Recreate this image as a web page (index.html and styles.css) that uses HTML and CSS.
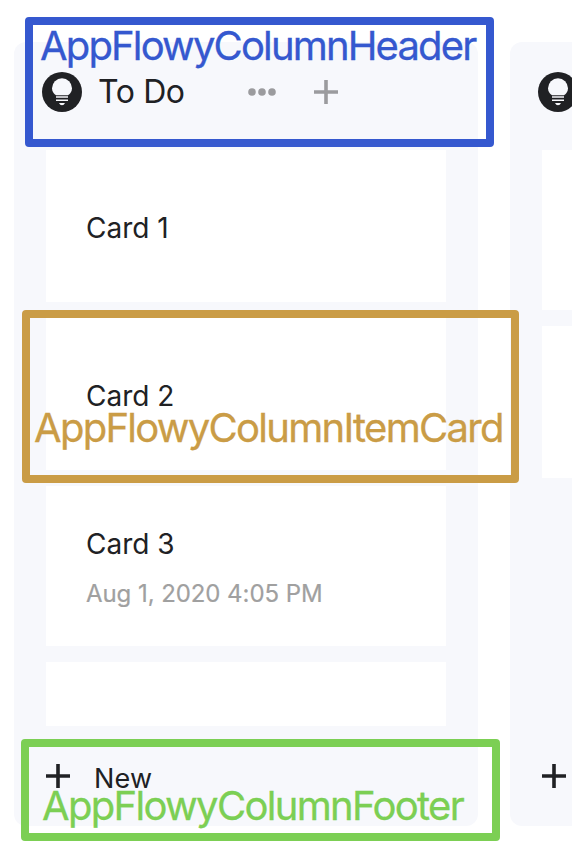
FILE: index.html
```html
<!DOCTYPE html>
<html lang="en">
<head>
<meta charset="utf-8">
<title>Board</title>
<link rel="stylesheet" href="styles.css">
</head>
<body>
<svg class="defs" aria-hidden="true">
  <symbol id="bulb" viewBox="0 0 40 40">
    <circle cx="20" cy="20" r="20" fill="#202124"/>
    <path d="M14 23.200C11.600 21.600 10 19.200 10 16.200a10 10 0 0 1 20 0c0 3-1.600 5.400-4 7z" fill="#f7f8fc"/>
    <path d="M14 24.200h12v1.600H14zM14 27.400h12v1.700H14zM17 31.100h6q-1 2.200-3 2.200t-3-2.200z" fill="#f7f8fc"/>
  </symbol>
  <symbol id="plus" viewBox="0 0 24 24"><path d="M0 12h24M12 0v24" stroke="currentColor" stroke-width="3.600"/></symbol>
</svg>
<main class="board">
  <section class="column">
    <header class="column-header">
      <svg class="bulb"><use href="#bulb"/></svg>
      <h2 class="title">To Do</h2>
      <svg class="dots" viewBox="0 0 28 8"><circle cx="4" cy="4" r="3.800"/><circle cx="14" cy="4" r="3.800"/><circle cx="24" cy="4" r="3.800"/></svg>
      <svg class="plus plus-muted"><use href="#plus"/></svg>
    </header>
    <div class="cards">
      <article class="card"><p class="name">Card 1</p></article>
      <article class="card"><p class="name">Card 2</p></article>
      <article class="card card-dated"><p class="name">Card 3</p><p class="date">Aug 1, 2020 4:05 PM</p></article>
      <article class="card card-empty"></article>
    </div>
    <footer class="column-footer">
      <svg class="plus"><use href="#plus"/></svg>
      <span class="new">New</span>
    </footer>
  </section>
  <section class="column">
    <header class="column-header"><svg class="bulb"><use href="#bulb"/></svg></header>
    <div class="cards">
      <article class="card card-dated"></article>
      <article class="card"></article>
    </div>
    <footer class="column-footer"><svg class="plus"><use href="#plus"/></svg></footer>
  </section>
</main>
<div class="note note-header"><span>AppFlowyColumnHeader</span></div>
<div class="note note-card"><span>AppFlowyColumnItemCard</span></div>
<div class="note note-footer"><span>AppFlowyColumnFooter</span></div>
</body>
</html>
```
FILE: styles.css
```css
* { box-sizing: border-box; margin: 0; padding: 0; }
html { overflow: hidden; }
body {
  position: relative;
  width: 572px;
  height: 852px;
  overflow: hidden;
  background: #fff;
  color: #202124;
  font-family: Inter, "Liberation Sans", sans-serif;
}
svg { display: block; flex: none; }
.defs { position: absolute; width: 0; height: 0; }
.board { display: flex; gap: 32px; padding: 42px 0 0 14px; overflow: hidden; }
.column {
  display: flex;
  flex: none;
  flex-direction: column;
  width: 464px;
  height: 784px;
  border-radius: 12px;
  background: #f7f8fc;
}
.column-header { display: flex; align-items: center; height: 108px; padding: 0 28px 8px; }
.bulb { width: 40px; height: 40px; }
.title { width: 148px; margin-left: 16px; font-size: 32px; font-weight: 400; line-height: 40px; letter-spacing: -0.4px; }
.dots { width: 28px; height: 8px; margin-left: 2px; fill: #9b9b9e; }
.plus { width: 24px; height: 24px; }
.plus-muted { margin-left: 38px; color: #9b9b9e; }
.cards { display: flex; flex-direction: column; gap: 16px; padding: 0 32px; }
.card { height: 152px; padding: 58px 40px 0; background: #fff; }
.card-dated { height: 160px; padding-top: 38px; }
.card-empty { height: 64px; }
.name { font-size: 28px; line-height: 40px; }
.date { margin-top: 10px; color: #a0a0a0; font-size: 24px; line-height: 40px; letter-spacing: -0.07px; white-space: nowrap; -webkit-text-stroke: 0.2px; }
.column-footer { display: flex; align-items: center; height: 100px; margin-top: auto; padding-left: 32px; }
.new { margin: 5px 0 0 24px; font-size: 27px; line-height: 40px; letter-spacing: 0.2px; }

/* Callouts drawn over the board */
.note { position: absolute; border: 8px solid; border-radius: 4px; font-size: 40px; line-height: 48px; white-space: nowrap; -webkit-text-stroke: 0.3px; }
.note-header { top: 17px; left: 25px; width: 469px; height: 130px; padding-left: 7px; color: #3558cf; letter-spacing: -1.850px; }
.note-header span { display: block; margin-top: -3px; }
.note-card { top: 310px; left: 22px; width: 497px; height: 173px; padding: 86px 0 0 4px; color: #ca9c46; letter-spacing: -1.720px; }
.note-footer { top: 739px; left: 21px; width: 479px; height: 102px; padding: 35px 0 0 13px; color: #7ccf54; letter-spacing: -1.680px; }
```
